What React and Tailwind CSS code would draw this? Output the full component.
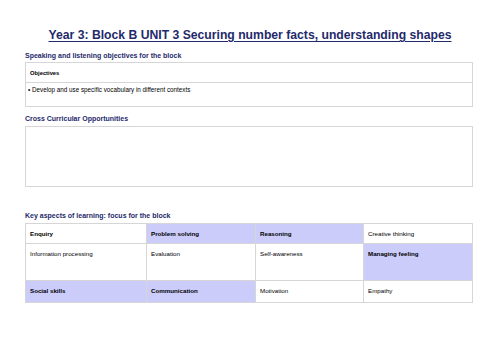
import React from 'react'

const FONT = { fontFamily: '"Comic Sans MS", "Liberation Sans", Arial, sans-serif' }

const ROWS = [
  [
    { text: 'Enquiry', bold: true },
    { text: 'Problem solving', bold: true, hl: true },
    { text: 'Reasoning', bold: true, hl: true },
    { text: 'Creative thinking' },
  ],
  [
    { text: 'Information processing' },
    { text: 'Evaluation' },
    { text: 'Self-awareness' },
    { text: 'Managing feeling', bold: true, hl: true },
  ],
  [
    { text: 'Social skills', bold: true, hl: true },
    { text: 'Communication', bold: true, hl: true },
    { text: 'Motivation' },
    { text: 'Empathy' },
  ],
]

const ROW_HEIGHTS = ['h-[20px]', 'h-[37px]', 'h-[21px]']

const SectionTitle = ({ children, className = '' }) => (
  <h2 className={`text-[7px] leading-[8px] font-bold text-[#1f2a6b] ${className}`}>{children}</h2>
)

export default function App() {
  return (
    <div className="w-[500px] h-[354px] bg-white overflow-hidden" style={FONT}>
      <div className="pt-[28px] text-center">
        <h1 className="text-[12.2px] leading-[14px] font-bold text-[#1f2a6b] underline underline-offset-2">
          Year 3: Block B UNIT 3 Securing number facts, understanding shapes
        </h1>
      </div>

      <div className="px-[25px] w-[498px]">
        {/* Speaking and listening */}
        <SectionTitle className="mt-[10px]">Speaking and listening objectives for the block</SectionTitle>
        <div className="mt-[2px] border border-[#d6d6d6]">
          <div className="h-[20px] border-b border-[#d6d6d6] px-[4px] pt-[7px] text-[5.8px] leading-[6px] font-bold text-black">
            Objectives
          </div>
          <div className="h-[23px] px-[2px] pt-[3px] text-[6.3px] leading-[7px] text-black">
            • Develop and use specific vocabulary in different contexts
          </div>
        </div>

        {/* Cross curricular */}
        <SectionTitle className="mt-[8px]">Cross Curricular Opportunities</SectionTitle>
        <div className="mt-[3px] h-[61px] border border-[#d6d6d6]" />

        {/* Key aspects */}
        <SectionTitle className="mt-[25px]">Key aspects of learning: focus for the block</SectionTitle>
        <div className="mt-[3px] w-[448px] border border-[#d6d6d6] grid grid-cols-[121px_109px_108px_1fr]">
          {ROWS.map((row, r) =>
            row.map((cell, c) => (
              <div
                key={`${r}-${c}`}
                className={`${ROW_HEIGHTS[r]} px-[4px] pt-[6px] text-[6.2px] leading-[7px] text-black ${
                  cell.bold ? 'font-bold' : ''
                } ${cell.hl ? 'bg-[#ccccfb]' : 'bg-white'} ${c < 3 ? 'border-r' : ''} ${
                  r < 2 ? 'border-b' : ''
                } border-[#d6d6d6]`}
              >
                {cell.text}
              </div>
            ))
          )}
        </div>
      </div>
    </div>
  )
}
